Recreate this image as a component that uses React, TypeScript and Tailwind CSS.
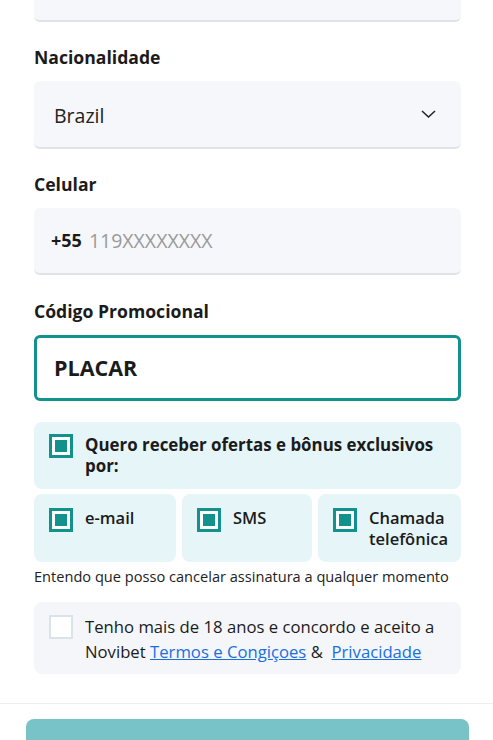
const CheckedBox = () => (
    <div className="w-6 h-6 shrink-0 border-[3px] border-[#12918d] bg-white p-[3px]">
        <div className="w-full h-full bg-[#12918d]"></div>
    </div>
);

const Label = ({ children }: { children: React.ReactNode }) => (
    <div className="text-[17.6px] leading-6 font-bold text-[#1b1b1b] mb-3">{children}</div>
);

const Canal = ({ texto, className }: { texto: string; className: string }) => (
    <div className={`bg-[#e6f5f8] rounded-lg pl-[15px] pr-2 pt-[14px] h-[68px] flex gap-3 ${className}`}>
        <CheckedBox />
        <span className="text-[16.5px] leading-[21px] font-semibold text-[#1b1b1b] -mt-[1px]">{texto}</span>
    </div>
);

export default function App() {
    return (
        <div className="bg-white font-['Open_Sans',sans-serif] overflow-hidden h-[740px]">
            <div className="pl-[34px] pr-[32px]">
                <div className="h-[22px] bg-[#f6f7fa] border-b-2 border-[#dfe2e7] rounded-b-md"></div>

                <div className="mt-[23px]">
                    <Label>Nacionalidade</Label>
                    <div className="h-[68px] bg-[#f6f7fa] border-b-2 border-[#dfe2e7] rounded-md flex items-center justify-between pl-5 pr-[25px]">
                        <span className="text-[19.5px] text-[#222] mt-[3px]">Brazil</span>
                        <svg width="15" height="8" viewBox="0 0 15 8" fill="none" className="-mt-[1px]">
                            <polyline points="1,1 7.5,7 14,1" stroke="#222" strokeWidth="1.5" />
                        </svg>
                    </div>
                </div>

                <div className="mt-[23px]">
                    <Label>Celular</Label>
                    <div className="h-[67px] bg-[#f6f7fa] border-b-2 border-[#dfe2e7] rounded-md flex items-center pl-[17px] gap-[7px]">
                        <span className="text-[18px] font-bold text-[#1b1b1b]">+55</span>
                        <span className="text-[19.5px] text-[#9a9a9a]">119XXXXXXXX</span>
                    </div>
                </div>

                <div className="mt-[24px]">
                    <Label>Código Promocional</Label>
                    <div className="h-[66px] border-[3px] border-[#12918d] rounded-md flex items-center pl-[17px]">
                        <span className="text-[21.5px] font-bold text-[#1b1b1b]">PLACAR</span>
                    </div>
                </div>

                <div className="mt-[21px] bg-[#e6f5f8] rounded-lg h-[67px] pl-[15px] pr-4 pt-[12px] flex gap-3">
                    <CheckedBox />
                    <span className="text-[16.9px] leading-[21px] font-bold text-[#1b1b1b]">Quero receber ofertas e bônus exclusivos por:</span>
                </div>

                <div className="mt-[5px] flex gap-[6px]">
                    <Canal texto="e-mail" className="w-[142px]" />
                    <Canal texto="SMS" className="w-[130px]" />
                    <Canal texto="Chamada telefônica" className="flex-1" />
                </div>

                <p className="mt-[5px] text-[14.6px] leading-[18px] text-[#222]">Entendo que posso cancelar assinatura a qualquer momento</p>

                <div className="mt-[17px] bg-[#f4f6fa] rounded-lg h-[72px] pl-[15px] pr-3 pt-[12px] flex gap-3">
                    <div className="w-6 h-6 shrink-0 border-2 border-[#dce2ea] bg-white mt-[1px]"></div>
                    <p className="text-[16.7px] leading-[25px] text-[#1b1b1b]">
                        Tenho mais de 18 anos e concordo e aceito a Novibet{' '}
                        <a className="text-[#1a6fe0] underline">Termos e Congiçoes</a>{' '}&amp;{'\u00a0 '}
                        <a className="text-[#1a6fe0] underline">Privacidade</a>
                    </p>
                </div>
            </div>

            <div className="mt-[29px] border-t border-[#efefef] pl-[26px] pr-[24px] pt-[15px]">
                <div className="h-[60px] bg-[#78c3c8] rounded-lg"></div>
            </div>
        </div>
    );
}
